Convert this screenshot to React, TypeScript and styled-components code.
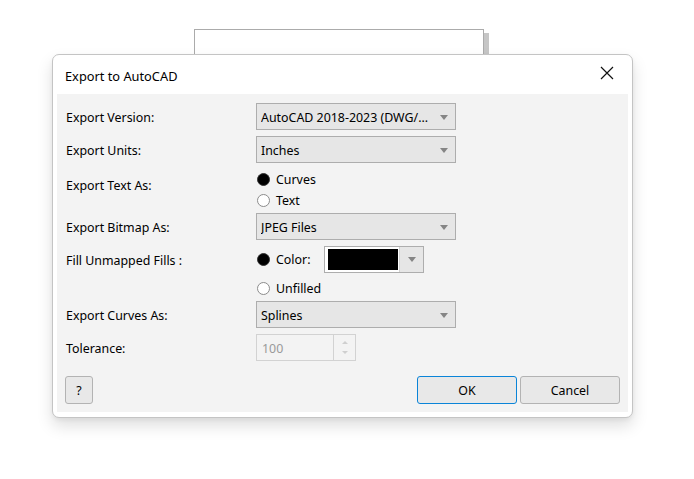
import { FC, ReactNode } from 'react'
import styled, { createGlobalStyle } from 'styled-components'

const GlobalStyle = createGlobalStyle`
  html, body {
    margin: 0;
    padding: 0;
    background: #ffffff;
  }
  body {
    font-family: 'Noto Sans', 'Liberation Sans', sans-serif;
    font-size: 12.4px;
    color: #000;
  }
`

const Dropdown: FC<{ value: string }> = ({ value }) => (
  <Select>
    <SelectText>{value}</SelectText>
    <Caret />
  </Select>
)

const Radio: FC<{ checked?: boolean; children: ReactNode }> = ({ checked, children }) => (
  <RadioItem>
    <RadioDot $checked={checked} />
    {children}
  </RadioItem>
)

export default function App() {
  return (
    <>
      <GlobalStyle />
      <Desktop>
        <BackWindow />
        <Dialog>
          <TitleBar>
            <Title>Export to AutoCAD</Title>
            <CloseButton aria-label="Close">
              <svg width="14" height="14" viewBox="0 0 14 14">
                <path d="M1 1 L13 13 M13 1 L1 13" stroke="#111" strokeWidth="1.2" fill="none" />
              </svg>
            </CloseButton>
          </TitleBar>
          <Panel>
            <Form>
              <Label>Export Version:</Label>
              <Dropdown value="AutoCAD 2018-2023 (DWG/..." />

              <Label>Export Units:</Label>
              <Dropdown value="Inches" />

              <Label $span={2}>Export Text As:</Label>
              <Radio checked>Curves</Radio>
              <Radio>Text</Radio>

              <Label>Export Bitmap As:</Label>
              <Dropdown value="JPEG Files" />

              <Label>Fill Unmapped Fills :</Label>
              <ColorRow>
                <Radio checked>Color:</Radio>
                <ColorPicker>
                  <Swatch />
                  <SwatchArrow>
                    <Caret />
                  </SwatchArrow>
                </ColorPicker>
              </ColorRow>

              <Spacer />
              <Radio>Unfilled</Radio>

              <Label>Export Curves As:</Label>
              <Dropdown value="Splines" />

              <Label>Tolerance:</Label>
              <Spin>
                <SpinValue>100</SpinValue>
                <SpinArrows>
                  <SpinArrow $up />
                  <SpinArrow />
                </SpinArrows>
              </Spin>
            </Form>
            <Footer>
              <Button $width={28}>?</Button>
              <FooterRight>
                <Button $width={100} $primary>
                  OK
                </Button>
                <Button $width={100}>Cancel</Button>
              </FooterRight>
            </Footer>
          </Panel>
        </Dialog>
      </Desktop>
    </>
  )
}

const Desktop = styled.div`
  position: relative;
  width: 694px;
  height: 479px;
  padding: 54px 0 0 52px;
  box-sizing: border-box;
`

const BackWindow = styled.div`
  position: absolute;
  left: 194px;
  top: 29px;
  width: 288px;
  height: 60px;
  background: #fff;
  border: 1px solid #ababab;
  box-shadow: 5px 4px 0 #c6c6c6;
`

const Dialog = styled.div`
  position: relative;
  width: 581px;
  height: 364px;
  box-sizing: border-box;
  background: #fff;
  border: 1px solid #c4c4c4;
  border-radius: 7px;
  box-shadow: 0 8px 16px rgba(0, 0, 0, 0.13), 0 2px 4px rgba(0, 0, 0, 0.05);
  padding: 0 4px 5px 4px;
  display: flex;
  flex-direction: column;
`

const TitleBar = styled.div`
  height: 39px;
  display: flex;
  align-items: center;
  justify-content: space-between;
  padding: 0 14px 0 8px;
`

const Title = styled.div`
  font-size: 12.8px;
  padding-top: 2px;
`

const CloseButton = styled.div`
  width: 14px;
  height: 14px;
  display: flex;
  margin-top: -4px;
`

const Panel = styled.div`
  flex: 1;
  background: #f3f3f3;
  padding: 9px 8px 8px 9px;
  display: flex;
  flex-direction: column;
  justify-content: space-between;
`

const Form = styled.div`
  display: grid;
  grid-template-columns: 190px 1fr;
  grid-template-rows: 33px 33px 21px 23px 33px 32px 23px 33px 27px;
  align-items: start;
`

const Label = styled.div<{ $span?: number }>`
  grid-row: span ${p => p.$span ?? 1};
  height: ${p => (p.$span ? 30 : 27)}px;
  display: flex;
  align-items: center;
  padding-top: ${p => (p.$span ? 3 : 1)}px;
  box-sizing: border-box;
`

const Spacer = styled.div``

const Select = styled.div`
  width: 200px;
  height: 27px;
  box-sizing: border-box;
  background: #e6e6e6;
  border: 1px solid #adadad;
  display: flex;
  align-items: center;
  padding: 1px 7px 0 4px;
`

const SelectText = styled.span`
  flex: 1;
  white-space: nowrap;
  overflow: hidden;
`

const Caret = styled.span`
  width: 0;
  height: 0;
  border-left: 4px solid transparent;
  border-right: 4px solid transparent;
  border-top: 5px solid #858585;
`

const RadioItem = styled.label`
  height: 20px;
  display: flex;
  align-items: center;
  gap: 6px;
`

const RadioDot = styled.span<{ $checked?: boolean }>`
  width: 13px;
  height: 13px;
  margin-left: 1px;
  box-sizing: border-box;
  border-radius: 50%;
  background: ${p => (p.$checked ? '#000' : '#fff')};
  border: 1px solid ${p => (p.$checked ? '#333' : '#8c8c8c')};
`

const ColorRow = styled.div`
  width: 168px;
  height: 27px;
  display: flex;
  align-items: center;
  justify-content: space-between;
`

const ColorPicker = styled.div`
  width: 100px;
  height: 27px;
  box-sizing: border-box;
  border: 1px solid #adadad;
  background: #fff;
  display: flex;
`

const Swatch = styled.div`
  width: 70px;
  margin: 2px 0 2px 3px;
  background: #000;
`

const SwatchArrow = styled.div`
  margin-left: auto;
  width: 23px;
  background: #e6e6e6;
  border-left: 1px solid #d4d4d4;
  display: flex;
  align-items: center;
  justify-content: center;
`

const Spin = styled.div`
  width: 100px;
  height: 27px;
  box-sizing: border-box;
  border: 1px solid #d2d2d2;
  display: flex;
`

const SpinValue = styled.div`
  flex: 1;
  color: #9a9a9a;
  display: flex;
  align-items: center;
  padding: 1px 0 0 5px;
  border-right: 1px solid #d2d2d2;
`

const SpinArrows = styled.div`
  width: 21px;
  display: flex;
  flex-direction: column;
  align-items: center;
  justify-content: space-around;
  padding: 3px 0;
`

const SpinArrow = styled.span<{ $up?: boolean }>`
  width: 0;
  height: 0;
  border-left: 3px solid transparent;
  border-right: 3px solid transparent;
  ${p => (p.$up ? 'border-bottom: 3px solid #cfcfcf;' : 'border-top: 3px solid #cfcfcf;')}
`

const Footer = styled.div`
  display: flex;
  justify-content: space-between;
  margin-left: -1px;
`

const FooterRight = styled.div`
  display: flex;
  gap: 3px;
`

const Button = styled.button<{ $width: number; $primary?: boolean }>`
  width: ${p => p.$width}px;
  height: 28px;
  font: inherit;
  color: #000;
  background: #e8e8e8;
  border: 1px solid ${p => (p.$primary ? '#0a84d8' : '#b3b3b3')};
  border-radius: 3px;
  padding: 1px 0 0;
  display: flex;
  align-items: center;
  justify-content: center;
`
